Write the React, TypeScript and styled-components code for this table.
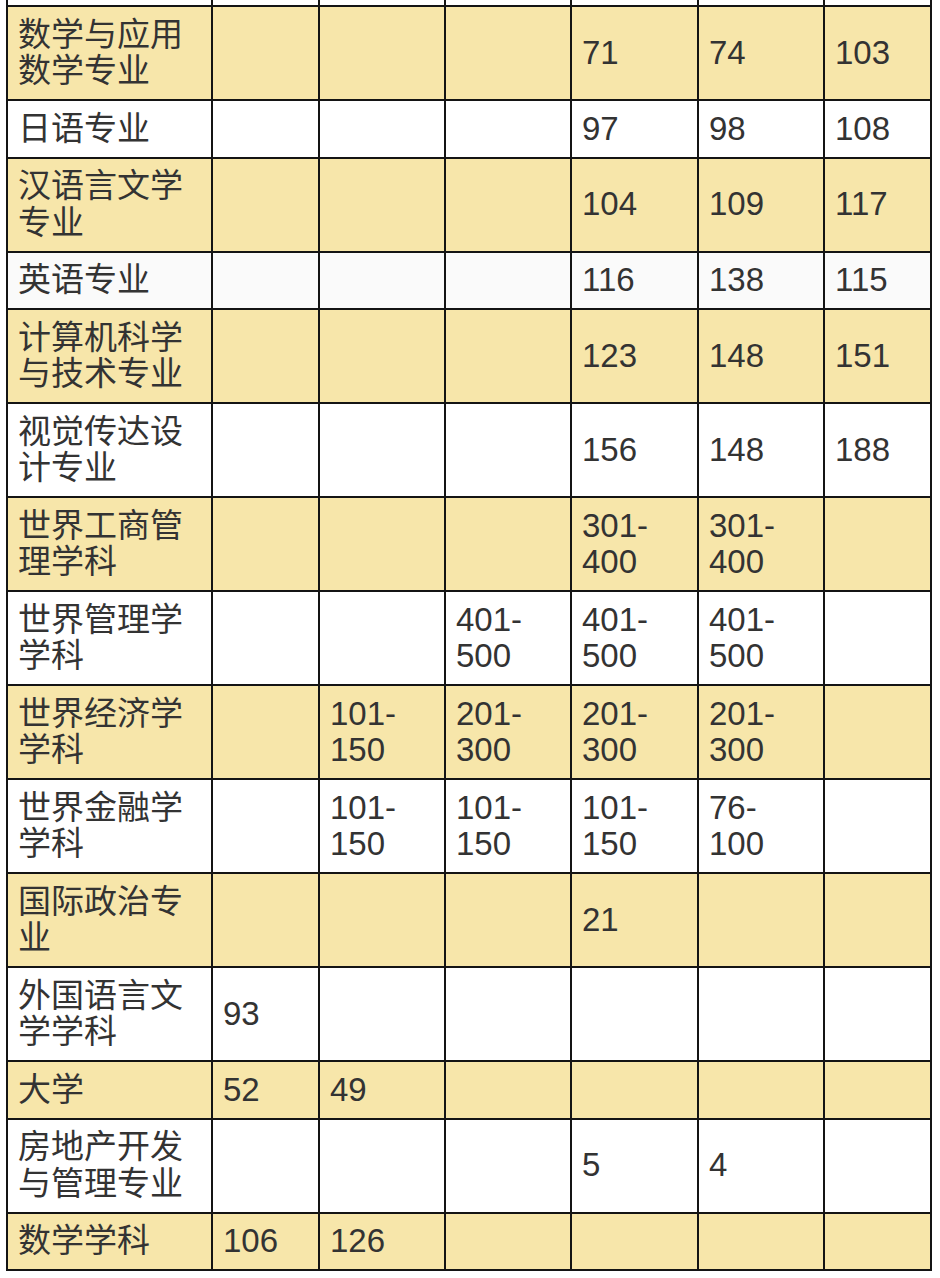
import React from 'react';
import styled, { createGlobalStyle } from 'styled-components';

const GlobalStyle = createGlobalStyle`
  html, body {
    margin: 0;
    padding: 0;
    background: #fff;
  }
  body {
    font-family: "Liberation Sans", Arial, "Noto Sans CJK SC", sans-serif;
    color: #333;
  }
`;

const Page = styled.div`
  padding: 0 0 0 6px;
  width: 924px;
`;

const Table = styled.table`
  width: 924px;
  table-layout: fixed;
  border-collapse: collapse;
  font-size: 33px;
  line-height: 36.5px;
`;

const Row = styled.tr<{ $tint: 'yellow' | 'white' | 'grey' }>`
  background: ${(p) =>
    p.$tint === 'yellow' ? '#f7e6aa' : p.$tint === 'grey' ? '#fafafa' : '#fff'};
`;

const Cell = styled.td`
  border: 2px solid #141414;
  padding: 9.5px 13px 9.5px 10px;
  vertical-align: middle;
  text-align: left;
  word-wrap: break-word;
`;

const StubCell = styled.td`
  border: 2px solid #141414;
  border-top: none;
  height: 5px;
  padding: 0;
`;

type Entry = { name: string; values: string[]; grey?: boolean };

const widths = [205, 107, 126, 126, 127, 126, 107];

const rows: Entry[] = [
  { name: '数学与应用数学专业', values: ['', '', '', '71', '74', '103'] },
  { name: '日语专业', values: ['', '', '', '97', '98', '108'] },
  { name: '汉语言文学专业', values: ['', '', '', '104', '109', '117'] },
  { name: '英语专业', values: ['', '', '', '116', '138', '115'], grey: true },
  { name: '计算机科学与技术专业', values: ['', '', '', '123', '148', '151'] },
  { name: '视觉传达设计专业', values: ['', '', '', '156', '148', '188'] },
  { name: '世界工商管理学科', values: ['', '', '', '301-400', '301-400', ''] },
  { name: '世界管理学学科', values: ['', '', '401-500', '401-500', '401-500', ''] },
  { name: '世界经济学学科', values: ['', '101-150', '201-300', '201-300', '201-300', ''] },
  { name: '世界金融学学科', values: ['', '101-150', '101-150', '101-150', '76-100', ''] },
  { name: '国际政治专业', values: ['', '', '', '21', '', ''] },
  { name: '外国语言文学学科', values: ['93', '', '', '', '', ''] },
  { name: '大学', values: ['52', '49', '', '', '', ''] },
  { name: '房地产开发与管理专业', values: ['', '', '', '5', '4', ''] },
  { name: '数学学科', values: ['106', '126', '', '', '', ''] },
];

const App: React.FC = () => {
  return (
    <>
      <GlobalStyle />
      <Page>
        <Table>
          <colgroup>
            {widths.map((w, i) => (
              <col key={i} style={{ width: w }} />
            ))}
          </colgroup>
          <tbody>
            {/* tail of the row above, scrolled out of view */}
            <Row $tint="white">
              {widths.map((_, i) => (
                <StubCell key={i} />
              ))}
            </Row>
            {rows.map((r, i) => (
              <Row key={r.name} $tint={i % 2 === 0 ? 'yellow' : r.grey ? 'grey' : 'white'}>
                <Cell>{r.name}</Cell>
                {r.values.map((v, j) => (
                  <Cell key={j}>{v}</Cell>
                ))}
              </Row>
            ))}
          </tbody>
        </Table>
      </Page>
    </>
  );
};

export default App;
